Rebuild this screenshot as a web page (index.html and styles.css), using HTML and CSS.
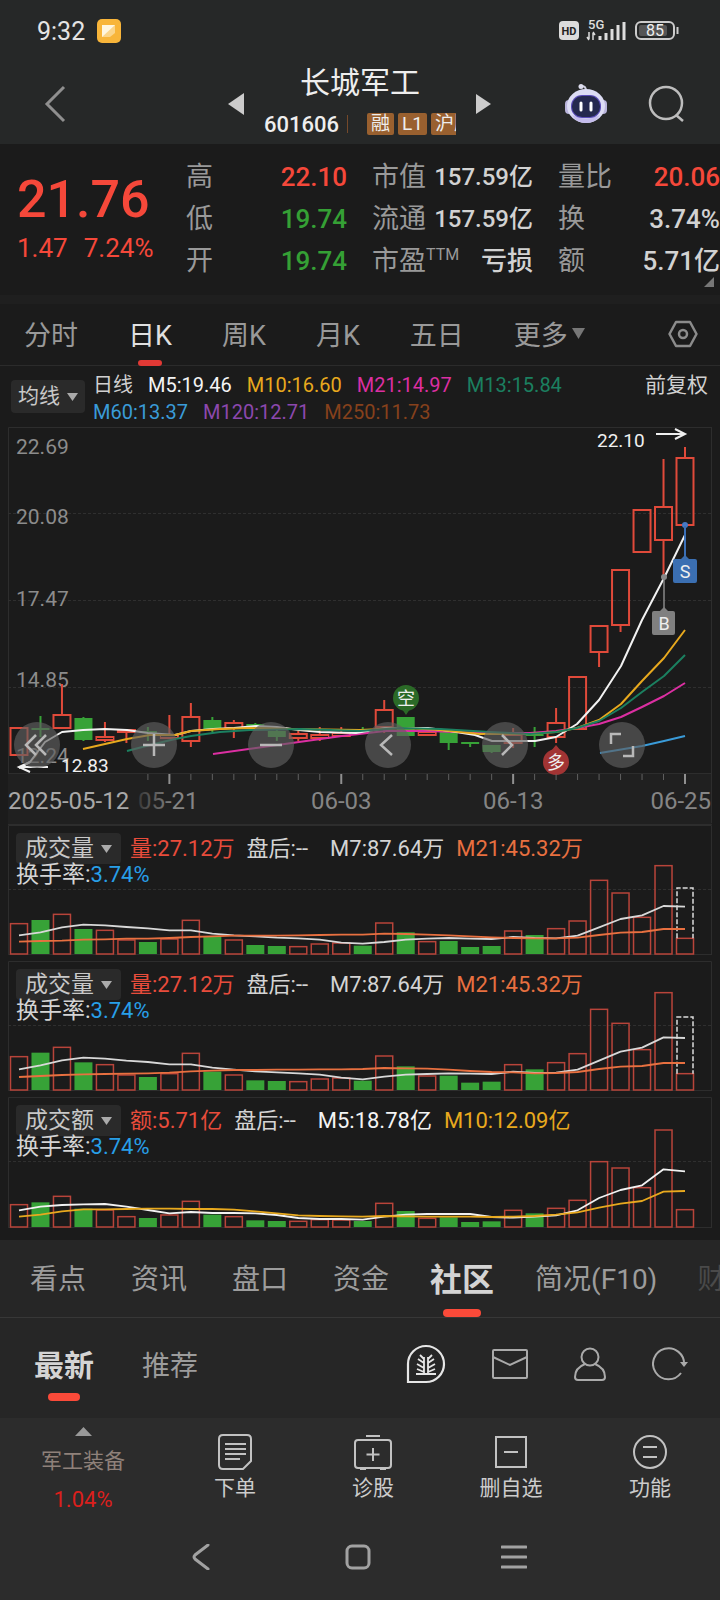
FILE: index.html
```html
<!DOCTYPE html>
<html lang="zh-CN">
<head>
<meta charset="utf-8">
<meta name="viewport" content="width=device-width, initial-scale=1">
<title>长城军工 601606</title>
<link rel="stylesheet" href="styles.css">
</head>
<body>
<div class="top">
  <div class="status">
    <span class="clock">9:32</span>
    <svg class="app-icon" width="24" height="24" viewBox="0 0 24 24"><rect width="24" height="24" rx="5" fill="#f8b53a"/><path d="M5 6h13v8l-5 4H5z" fill="#fbd58a"/><path d="M5 6h13L5 18z" fill="#fff6e0"/></svg>
    <span class="spacer"></span>
    <svg width="122" height="28" viewBox="0 -2 122 28">
      <rect x="1" y="2" width="20" height="19" rx="4" fill="#dcdcdc"/>
      <text x="11" y="16" class="hd">HD</text>
      <text x="30" y="10" class="net">5G</text>
      <path d="M31 13v7M35 21v-7M29 18l2 3M37 16l-2-3" stroke="#ddd" stroke-width="1.500" fill="none"/>
      <path d="M42 21v-4M48 21v-7M54 21V10M60 21V6M66 21V3" stroke="#ddd" stroke-width="3"/>
      <rect x="78" y="3" width="38" height="17" rx="5" fill="none" stroke="#ccc" stroke-width="2"/>
      <rect x="81" y="6" width="28" height="11" rx="2" fill="#555"/>
      <path d="M119.500 8v7" stroke="#ccc" stroke-width="2"/>
      <text x="97" y="17" class="batt">85</text>
    </svg>
  </div>
  <header class="header">
    <button class="icon-btn back" aria-label="返回"><svg width="22" height="38" viewBox="0 0 22 38"><path d="M20 2L3 19l17 17" fill="none" stroke="#8f8f8f" stroke-width="3"/></svg></button>
    <div class="stock">
      <button class="icon-btn" aria-label="上一只"><svg width="16" height="22" viewBox="0 0 16 22"><path d="M16 0v22L0 11z" fill="#ccc"/></svg></button>
      <div class="stock-id">
        <h1>长城军工</h1>
        <div class="code-row"><span class="code">601606</span><span class="bar"></span><span class="tags"><span class="tag">融</span><span class="tag">L1</span><span class="tag">沪股</span></span></div>
      </div>
      <button class="icon-btn" aria-label="下一只"><svg width="16" height="22" viewBox="0 0 16 22"><path d="M0 1v20l15-10z" fill="#ccc"/></svg></button>
    </div>
    <div class="header-actions">
      <button class="icon-btn" aria-label="智能助手"><svg width="44" height="42" viewBox="0 0 44 42">
        <path d="M22 8q0-5-4-5" fill="none" stroke="#ccd" stroke-width="2"/><circle cx="17" cy="3.500" r="2.500" fill="#dde"/>
        <rect x="1" y="17" width="8" height="14" rx="4" fill="#b9b4dc"/><rect x="35" y="17" width="8" height="14" rx="4" fill="#b9b4dc"/>
        <ellipse cx="22" cy="23" rx="19" ry="17" fill="#dcdcf4"/><path d="M8 32q14 7 28 0-4 8-14 8T8 32z" fill="#c4bcec"/>
        <rect x="7" y="12" width="30" height="23" rx="11" fill="#5a4cb8"/><rect x="8" y="13" width="28" height="21" rx="10" fill="#25294f"/>
        <path d="M17 20v7M27 20v7" stroke="#fff" stroke-width="3" stroke-linecap="round"/></svg></button>
      <button class="icon-btn" aria-label="搜索"><svg width="38" height="38" viewBox="0 0 38 38"><circle cx="18" cy="18" r="16" fill="none" stroke="#bdbdbd" stroke-width="2.500"/><path d="M28 30l7 6" stroke="#bdbdbd" stroke-width="2.500"/></svg></button>
    </div>
  </header>
</div>

<section class="quote">
  <div class="price"><div class="last">21.76</div><div class="change"><span>1.47</span><span>7.24%</span></div></div>
  <dl class="facts">
    <div><dt>高</dt><dd class="up">22.10</dd></div>
    <div><dt>低</dt><dd class="down">19.74</dd></div>
    <div><dt>开</dt><dd class="down">19.74</dd></div>
  </dl>
  <dl class="facts">
    <div><dt>市值</dt><dd class="unit">157.59亿</dd></div>
    <div><dt>流通</dt><dd class="unit">157.59亿</dd></div>
    <div><dt>市盈<sup>TTM</sup></dt><dd>亏损</dd></div>
  </dl>
  <dl class="facts">
    <div><dt>量比</dt><dd class="up">20.06</dd></div>
    <div><dt>换</dt><dd>3.74%</dd></div>
    <div><dt>额</dt><dd>5.71亿</dd></div>
  </dl>
  <svg class="corner" width="10" height="10" viewBox="0 0 10 10"><path d="M10 0v10H0z" fill="#777"/></svg>
</section>

<nav class="period">
  <button>分时</button><button class="active">日K</button><button>周K</button><button>月K</button><button>五日</button>
  <button class="more">更多<svg width="13" height="11" viewBox="0 0 13 11"><path d="M0 0h13L6.500 11z" fill="#777"/></svg></button>
  <button class="settings" aria-label="设置"><svg width="30" height="28" viewBox="0 0 30 28"><path d="M8 2h14l6.500 12L22 26H8L1.500 14z" fill="none" stroke="#8c8c8c" stroke-width="2.500" stroke-linejoin="round"/><circle cx="15" cy="14" r="4" fill="none" stroke="#8c8c8c" stroke-width="2.500"/></svg></button>
</nav>

<div class="legend">
  <button class="select">均线<svg width="11" height="8" viewBox="0 0 11 8"><path d="M0 0h11L5.500 8z" fill="#aaa"/></svg></button>
  <div class="averages">
    <span>日线</span><span class="c-white">M5:19.46</span><span class="c-yellow">M10:16.60</span><span class="c-pink">M21:14.97</span><span class="c-green">M13:15.84</span>
    <span class="c-blue">M60:13.37</span><span class="c-purple">M120:12.71</span><span class="c-brown">M250:11.73</span>
  </div>
  <button class="adjust">前复权</button>
</div>

<section class="kline">
  <svg id="kline" viewBox="0 427 720 398" role="img" aria-label="日K线图"></svg>
  <div class="controls">
    <button aria-label="最左"><svg viewBox="0 0 46 46"><path d="M22 13L12 23l10 10M32 13L22 23l10 10"/></svg></button>
    <button aria-label="放大"><svg viewBox="0 0 46 46"><path d="M12 23h22M23 12v22"/></svg></button>
    <button aria-label="缩小"><svg viewBox="0 0 46 46"><path d="M12 23h22"/></svg></button>
    <button aria-label="左移"><svg viewBox="0 0 46 46"><path d="M27 13L16 23l11 10"/></svg></button>
    <button aria-label="右移"><svg viewBox="0 0 46 46"><path d="M20 13l10 10-10 10"/></svg></button>
    <button aria-label="全屏"><svg viewBox="0 0 46 46"><path d="M12 22V12h10M34 24v10H24"/></svg></button>
  </div>
</section>

<section class="volume">
  <svg id="vol1" viewBox="0 0 720 136" role="img" aria-label="成交量图"></svg>
  <div class="vol-head">
    <div class="vol-row"><button class="select">成交量<svg width="11" height="8" viewBox="0 0 11 8"><path d="M0 0h11L5.500 8z" fill="#aaa"/></svg></button><span class="c-red">量:27.12万</span><span class="after">盘后:--</span><span class="first">M7:87.64万</span><span class="c-orange">M21:45.32万</span></div>
    <div class="turnover">换手率:<span class="c-rate">3.74%</span></div>
  </div>
</section>
<section class="volume">
  <svg id="vol2" viewBox="0 0 720 136" role="img" aria-label="成交量图"></svg>
  <div class="vol-head">
    <div class="vol-row"><button class="select">成交量<svg width="11" height="8" viewBox="0 0 11 8"><path d="M0 0h11L5.500 8z" fill="#aaa"/></svg></button><span class="c-red">量:27.12万</span><span class="after">盘后:--</span><span class="first">M7:87.64万</span><span class="c-orange">M21:45.32万</span></div>
    <div class="turnover">换手率:<span class="c-rate">3.74%</span></div>
  </div>
</section>
<section class="volume">
  <svg id="vol3" viewBox="0 0 720 143" role="img" aria-label="成交额图"></svg>
  <div class="vol-head">
    <div class="vol-row"><button class="select">成交额<svg width="11" height="8" viewBox="0 0 11 8"><path d="M0 0h11L5.500 8z" fill="#aaa"/></svg></button><span class="c-red">额:5.71亿</span><span class="after">盘后:--</span><span class="first c-white">M5:18.78亿</span><span class="c-yellow">M10:12.09亿</span></div>
    <div class="turnover">换手率:<span class="c-rate">3.74%</span></div>
  </div>
</section>

<nav class="sections">
  <button>看点</button><button>资讯</button><button>盘口</button><button>资金</button><button class="active">社区</button><button>简况(F10)</button><button class="faded">财</button>
</nav>
<div class="feed">
  <button class="active">最新</button><button>推荐</button>
  <span class="spacer"></span>
  <button aria-label="社区"><svg width="40" height="40" viewBox="0 0 40 40" fill="none" stroke="#e6e6e6" stroke-width="2.200"><path d="M2 38V20a18 18 0 1 1 18 18z"/><path d="M18 30V13M22 30V13M10 30h20M18 19l-6-4M18 24l-7-4M18 28l-7-3M18 15l-4-4M22 19l6-4M22 24l7-4M22 28l7-3M22 15l4-4" stroke-width="1.800"/></svg></button>
  <button aria-label="消息"><svg width="36" height="30" viewBox="0 0 36 30" fill="none" stroke="#aaa" stroke-width="2"><rect x="1" y="1" width="34" height="28" rx="1"/><path d="M1 8l17 8 17-8"/></svg></button>
  <button aria-label="我的"><svg width="32" height="34" viewBox="0 0 32 34" fill="none" stroke="#aaa" stroke-width="2"><circle cx="16" cy="10" r="8.500"/><path d="M11 17Q1 21 1 30q0 3 3 3h24q3 0 3-3 0-9-10-13"/></svg></button>
  <button aria-label="刷新"><svg width="36" height="34" viewBox="0 0 36 34"><path d="M32 18a15.500 15.500 0 1 0-3 8" fill="none" stroke="#aaa" stroke-width="2"/><path d="M28 15h8l-4 5z" fill="#aaa"/></svg></button>
</div>

<footer class="bottom">
  <div class="toolbar">
    <button class="sector"><svg width="17" height="9" viewBox="0 0 17 9"><path d="M0 9h17L8.500 0z" fill="#999"/></svg><span class="sector-name">军工装备</span><span class="sector-pct">1.04%</span></button>
    <button><svg width="40" height="38" viewBox="0 0 40 38"><path d="M8 2h24q4 0 4 4v22l-8 8H8q-4 0-4-4V6q0-4 4-4zM10 11h21M10 16h21M10 21h21M10 26h15"/></svg>下单</button>
    <button><svg width="40" height="38" viewBox="0 0 40 38"><path d="M5 7h30q3 0 3 3v22q0 3-3 3H5q-3 0-3-3V10q0-3 3-3zM13 3h14M20 15v13M13.500 21.500h13M7 36h6M27 36h6"/></svg>诊股</button>
    <button><svg width="40" height="38" viewBox="0 0 40 38"><path d="M5 4h30v30H5zM13 19h14"/></svg>删自选</button>
    <button><svg width="40" height="38" viewBox="0 0 40 38"><circle cx="20" cy="19" r="16"/><path d="M13 14h14M13 24h14"/></svg>功能</button>
  </div>
  <div class="system">
    <button aria-label="返回"><svg width="26" height="26" viewBox="0 0 26 26"><path d="M19 1L6 11q-2 2 0 4l13 10"/></svg></button>
    <button aria-label="主页"><svg width="26" height="26" viewBox="0 0 26 26"><rect x="2" y="2" width="22" height="22" rx="5"/></svg></button>
    <button aria-label="多任务"><svg width="26" height="26" viewBox="0 0 26 26"><path d="M1 3h24M1 13h24M1 23h24"/></svg></button>
  </div>
</footer>
<script src="charts.js"></script>
</body>
</html>
```
FILE: styles.css
```css
* { box-sizing: border-box; }
body {
  margin: 0;
  background: #1b1b1b;
  color: #d0d0d0;
  font-family: Roboto, "Noto Sans CJK SC", sans-serif;
  font-size: 22px;
  overflow-x: hidden;
}
button {
  margin: 0; padding: 0; border: 0; background: none;
  color: inherit; font: inherit; white-space: nowrap;
}
svg { display: block; flex: none; }
.spacer { flex: 1; }

.top { background: #262828; padding-bottom: 4px; }
.status { display: flex; align-items: center; height: 62px; padding: 0 40px 0 37px; }
.clock { font-size: 25px; color: #e4e4e4; }
.app-icon { margin-left: 12px; }
.hd { font-size: 11px; font-weight: 700; fill: #222; text-anchor: middle; }
.net { font-size: 13px; font-weight: 500; fill: #ddd; }
.batt { font-size: 16px; fill: #eee; text-anchor: middle; }

.header { display: grid; grid-template-columns: 1fr auto 1fr; align-items: center; height: 78px; padding: 0 34px; }
.icon-btn { display: block; }
.back { margin-left: 10px; justify-self: start; }
.stock { display: flex; align-items: center; gap: 20px; }
.stock-id { width: 192px; }
h1 { margin: 2px 0 0; font-size: 30px; line-height: 38px; font-weight: 400; color: #eee; text-align: center; }
.code-row { display: flex; align-items: center; height: 44px; }
.code { color: #eee; font-weight: 500; }
.bar { width: 1px; height: 18px; background: #75492a; margin-left: 8px; }
.tags { display: flex; gap: 4px; margin-left: auto; width: 89px; overflow: hidden; }
.tag { flex: none; padding: 0 4px; background: #99602f; border-radius: 2px; color: #eee; font-size: 19px; line-height: 22px; }
.header-actions { display: flex; justify-content: flex-end; align-items: center; gap: 40px; }

.quote {
  position: relative;
  display: grid; grid-template-columns: 144fr 161fr 161fr 162fr; gap: 25px;
  padding: 12px 0 13px 17px;
  border-bottom: 9px solid #1f1f1f;
}
.price { color: #f5483a; padding-top: 14px; }
.last { font-size: 52px; line-height: 60px; font-weight: 500; }
.change { display: flex; gap: 16px; font-size: 26px; line-height: 36px; }
.facts { margin: 0; }
.facts div { display: flex; justify-content: space-between; align-items: center; height: 42px; line-height: 42px; white-space: nowrap; }
dt { font-size: 27px; color: #999; }
dd { margin: 0; font-size: 26px; font-weight: 500; color: #d2d2d2; }
dd.unit { font-size: 24px; }
dd.up { color: #f5483a; }
dd.down { color: #35a035; }
sup { font-size: 16px; line-height: 1; }
.corner { position: absolute; right: 6px; bottom: 8px; }

.period { display: flex; align-items: center; gap: 50px; height: 62px; padding: 0 22px 0 24px; border-bottom: 1px solid #2b2b2b; font-size: 27px; color: #999; }
.period button { position: relative; height: 61px; padding-bottom: 2px; }
.period .active { color: #e0e0e0; }
.period .active::after { content: ""; position: absolute; left: 50%; bottom: -1px; width: 24px; height: 6px; margin-left: -12px; border-radius: 3px; background: #e23935; }
.more { display: flex; align-items: center; gap: 4px; }
.period .settings { margin-left: auto; display: flex; align-items: center; }

.legend { display: flex; align-items: flex-start; gap: 8px; min-height: 61px; padding: 6px 12px 0 11px; font-size: 20px; line-height: 27px; }
.select { display: flex; align-items: center; gap: 7px; background: #2a2a2a; border-radius: 4px; color: #c8c8c8; }
.legend .select { height: 33px; padding: 0 7px; margin-top: 8px; font-size: 21px; }
.averages { flex: 1; display: flex; flex-wrap: wrap; column-gap: 15px; }
.adjust { font-size: 21px; }
.c-white { color: #f4f4f4; }
.c-yellow { color: #e8a91e; }
.c-pink { color: #dc2fa2; }
.c-green { color: #1b8060; }
.c-blue { color: #3a9bd8; }
.c-purple { color: #8c48ae; }
.c-brown { color: #86411c; }
.c-red { color: #e84c3b; }
.c-orange { color: #e87040; }
.c-rate { color: #289fe8; }

.kline { position: relative; }
.kline > svg, .volume > svg { width: 100%; height: auto; }
.controls { position: absolute; left: 2%; right: 10.4%; top: 80%; display: flex; justify-content: space-between; transform: translateY(-50%); }
.controls button { width: 46px; height: 46px; border-radius: 50%; background: rgba(96, 96, 96, 0.65); }
.controls path { fill: none; stroke: #b8b8b8; stroke-width: 2.500; }
.price-label { font-size: 21px; fill: #8c8c8c; }
.date-label { font-size: 24px; fill: #858585; }
.date-label.start { fill: #a8a8a8; }
.extreme { font-size: 19px; fill: #f0f0f0; }
.marker { font-size: 18px; fill: #eee; text-anchor: middle; }

.volume { display: grid; }
.volume > svg, .vol-head { grid-area: 1 / 1; }
.vol-head { padding: 8px 16px 0; line-height: 24px; color: #d4d4d4; z-index: 1; }
.vol-row { display: flex; align-items: center; white-space: nowrap; }
.volume .select { height: 31px; padding: 0 9px; margin-right: 9px; font-size: 23px; }
.turnover { font-size: 23px; line-height: 22px; }
.c-rate { font-size: 22px; }
.after { margin-left: 12px; }
.first { margin-left: 22px; }
.first + span { margin-left: 12px; }

.sections { display: flex; align-items: center; gap: 45px; height: 78px; padding-left: 30px; overflow: hidden; background: #262626; border-bottom: 1px solid #373737; font-size: 28px; color: #9c9c9c; }
.sections button, .feed button { position: relative; }
.sections button { height: 77px; padding-bottom: 3px; }
.sections .active { font-size: 32px; font-weight: 700; color: #d4d4d4; margin: 0 -4px; }
.sections .active::after, .feed .active::after { content: ""; position: absolute; left: 50%; bottom: 0; width: 38px; height: 8px; margin-left: -19px; border-radius: 4px; background: #fa4a39; }
.sections .faded { color: #4a4a4a; margin-left: -5px; }
.feed { display: flex; align-items: center; height: 100px; padding: 0 32px 8px 34px; gap: 46px; background: #262626; font-size: 28px; color: #9c9c9c; }
.feed .active { font-size: 30px; font-weight: 700; color: #d4d4d4; margin-right: 2px; padding-bottom: 3px; }
.feed .active::after { width: 32px; margin-left: -16px; bottom: -13px; }

.bottom { background: #2c2c2c; min-height: 182px; }
.toolbar { display: grid; grid-template-columns: 166fr 138fr 138fr 138fr 140fr; height: 96px; font-size: 21px; color: #ccc; }
.toolbar button { display: flex; flex-direction: column; align-items: center; gap: 2px; padding-top: 15px; line-height: 30px; }
.toolbar button svg { fill: none; stroke: #c2c2c2; stroke-width: 2; }
.toolbar .sector { padding-top: 9px; gap: 9px; }
.toolbar .sector svg { stroke: none; }
.sector-name { color: #8f817a; line-height: 32px; }
.sector-pct { color: #dc1f1c; font-size: 22px; line-height: 28px; }
.system { display: flex; justify-content: center; gap: 130px; padding: 30px 4px 0 0; }
.system svg { fill: none; stroke: #a2a2a2; stroke-width: 3; stroke-linecap: round; }
```
FILE: charts.js
```js
const RED = "#e04a3a", GREEN = "#37a237";
const center = i => 19 + i * 666 / 31;
const line = (pts, color, w = 2) =>
  `<polyline points="${pts.map(p => p.join()).join(" ")}" fill="none" stroke="${color}" stroke-width="${w}" stroke-linejoin="round"/>`;

// [bodyTop, bodyBottom, high, low, falling]
const candles = [
  [728,755,728,755,0],[728,730,716,737,1],[715,728,684,728,0],[718,740,717,741,1],
  [737,740,722,742,0],[730,732,730,743,0],[731,733,727,741,1],[735,738,715,739,0],
  [717,741,703,747,0],[720,729,717,732,1],[723,728,720,738,0],[724,727,723,727,1],
  [731,737,730,741,1],[734,738,731,741,0],[735,738,727,741,0],[733,736,727,736,0],
  [729,731,727,732,1],[710,727,700,733,0],[717,736,717,736,1],[732,735,730,735,0],
  [732,743,732,750,1],[742,744,742,747,1],[745,752,745,753,1],[735,743,728,748,0],
  [734,736,727,747,1],[723,737,708,743,0],[677,729,677,729,0],[626,652,626,667,0],
  [570,625,570,632,0],[510,552,510,552,0],[507,540,459,577,0],[458,525,447,525,0]
];

function drawKline() {
  let s = `<rect x="8" y="774" width="704" height="50" fill="#202020"/>
    <path d="M8.500 773V427.500H712M711.500 427V823M8 773.500H712M8 824.500H712" fill="none" stroke="#2d2d2d"/>
    <path d="M8 513.500H712M8 600.500H712M8 687.500H712" stroke="#2f2f2f" stroke-dasharray="3 2"/>`;
  [["22.69",454],["20.08",524],["17.47",606],["14.85",687],["12.24",763]].forEach(([t, y]) => {
    s += `<text x="16" y="${y}" class="price-label">${t}</text>`;
  });
  candles.forEach(([t, b, h, l, falling], i) => {
    const x = center(i), c = falling ? GREEN : RED;
    s += `<path d="M${x} ${h}V${t}M${x} ${b}V${l}" stroke="${c}" stroke-width="2"/>`;
    s += falling
      ? `<rect x="${x - 9}" y="${t}" width="18" height="${b - t}" fill="${c}"/>`
      : `<rect x="${x - 8.5}" y="${t}" width="17" height="${b - t}" fill="none" stroke="${c}" stroke-width="2"/>`;
  });
  s += line([[600,753],[642,746],[664,741],[685,736]], "#3a9bd8");
  s += line([[213,754],[256,748],[299,742],[342,736],[385,731],[430,731],[480,733],[530,733],[556,731],[577,728],[599,724],[621,717],[642,707],[664,696],[685,683]], "#dc2fa2");
  s += line([[19,768],[30,762],[45,742],[62,732],[83,730],[105,729],[127,730],[148,733],[175,735],[191,731],[213,729],[234,728],[256,726],[277,727],[299,730],[320,732],[356,733],[385,728],[428,728],[450,731],[475,735],[492,741],[535,741],[556,737],[577,724],[599,700],[621,666],[642,620],[664,578],[685,535]], "#f2f2f2");
  s += line([[83,749],[105,744],[127,739],[150,735],[175,735],[191,731],[220,729],[250,728],[290,729],[360,730],[405,728],[440,730],[480,734],[530,734],[556,732],[577,728],[599,720],[621,704],[642,681],[664,658],[685,630]], "#e8a91e");
  s += line([[127,751],[150,745],[175,739],[191,736],[220,732],[250,730],[300,729],[360,731],[400,728],[440,729],[490,732],[530,734],[556,732],[577,728],[599,721],[621,708],[642,692],[664,676],[685,655]], "#1b8060");
  // trade signals
  s += `<path d="M402 709l4 6 4-6z" fill="#2b6a27"/><circle cx="406" cy="698" r="13" fill="#2b6a27"/><text x="406" y="705" class="marker">空</text>
    <path d="M551 751l5-6 5 6z" fill="#a23434"/><circle cx="556" cy="762" r="13" fill="#a23434"/><text x="556" y="769" class="marker">多</text>
    <circle cx="664" cy="577" r="3" fill="#888"/><path d="M664 578V611" stroke="#888" stroke-width="1.500"/>
    <path d="M654 611h6l4-4 4 4h5q2 0 2 2v20q0 2-2 2h-19q-2 0-2-2v-20q0-2 2-2z" fill="#808080"/><text x="664" y="630" class="marker">B</text>
    <circle cx="685" cy="525" r="3" fill="#4779c4"/><path d="M685 526V559" stroke="#3b70b8" stroke-width="2"/>
    <path d="M675 559h6l4-4 4 4h6q2 0 2 2v20q0 2-2 2h-20q-2 0-2-2v-20q0-2 2-2z" fill="#3b6fb2"/><text x="685" y="578" class="marker">S</text>
    <text x="597" y="447" class="extreme">22.10</text><path d="M656 434H684M675 429l10 5-10 5" fill="none" stroke="#f0f0f0" stroke-width="2"/>
    <text x="61" y="772" class="extreme">12.83</text><path d="M48 767H20M30 762l-11 5 11 5" fill="none" stroke="#f0f0f0" stroke-width="2"/>`;
  for (let i = 6; i < 32; i++) {
    const major = i % 8 === 7;
    s += `<path d="M${center(i)} 774v${major ? 10 : 6}" stroke="${major ? "#909090" : "#606060"}" stroke-width="${major ? 2 : 1}"/>`;
  }
  s += `<text x="8" y="809" class="date-label start">2025-05-12</text>
    <defs><linearGradient id="fade"><stop offset="0" stop-color="#3a3a3a"/><stop offset="0.600" stop-color="#858585"/></linearGradient></defs>
    <text x="138" y="809" class="date-label" style="fill:url(#fade)">05-21</text>
    <text x="311" y="809" class="date-label">06-03</text>
    <text x="483" y="809" class="date-label">06-13</text>
    <text x="711" y="809" class="date-label" text-anchor="end">06-25</text>`;
  document.getElementById("kline").innerHTML = s;
}

const falling = new Set([1, 3, 6, 9, 11, 12, 16, 18, 20, 21, 22, 24]);
// Bars and lines are levels in thirds of a chart unit; "floor" is the zero level.
function drawVolume(id, { base, floor, bars, slow, fast, fastColor, slowColor, estimate }) {
  const y = v => base - (floor - v) / 3;
  let s = `<path d="M8.500 ${base}V0.500H711.500V${base}M8 ${base}.500H712" fill="none" stroke="#2d2d2d"/>
    <path d="M8 64.500H712" stroke="#2f2f2f" stroke-dasharray="3 2"/>`;
  bars.forEach((v, i) => {
    const x = center(i), t = y(v);
    s += falling.has(i)
      ? `<rect x="${x - 9}" y="${t}" width="18" height="${base - t}" fill="${GREEN}"/>`
      : `<rect x="${x - 8.5}" y="${t}" width="17" height="${base - t}" fill="none" stroke="#b8443a" stroke-width="1.500"/>`;
  });
  if (estimate) s += `<path d="M677 ${y(bars[31])}V${y(estimate)}H693V${y(bars[31])}" fill="none" stroke="#ddd" stroke-width="1.500" stroke-dasharray="5 2"/>`;
  s += line(fast.map((v, i) => [center(i), y(v)]), fastColor, 1.8);
  s += line(slow.map((v, i) => [center(i), y(v)]), slowColor, 1.8);
  document.getElementById(id).innerHTML = s;
}

drawKline();
drawVolume("vol1", {
  base: 129, floor: 403, estimate: 205, fastColor: "#d8d8d8", slowColor: "#e87040",
  bars: [312,301,284,328,332,361,367,358,302,352,361,376,379,381,373,370,378,310,338,366,364,382,379,334,346,327,304,182,220,293,138,356],
  fast: [347,338,323,315,317,322,326,332,332,342,347,350,354,356,360,369,372,367,360,357,355,357,358,352,355,356,348,323,298,287,259,261],
  slow: [366,364,363,360,359,357,357,355,352,350,348,348,348,347,346,345,345,342,343,345,347,350,353,355,356,356,354,346,339,337,328,328]
});
drawVolume("vol2", {
  base: 129, floor: 812, estimate: 593, fastColor: "#d8d8d8", slowColor: "#e87040",
  bars: [712,700,684,729,736,767,773,763,702,757,767,783,785,787,779,776,784,710,741,770,769,790,787,736,750,730,703,570,612,691,520,763],
  fast: [750,738,723,715,718,724,728,735,735,745,751,756,759,762,766,775,780,772,766,764,762,763,764,757,761,760,751,724,697,685,654,656],
  slow: [773,770,767,765,764,763,762,760,756,754,752,752,751,751,750,750,749,746,747,748,751,755,758,759,762,761,758,749,742,740,731,731]
});
drawVolume("vol3", {
  base: 130, floor: 1221, fastColor: "#f2f2f2", slowColor: "#e8a91e",
  bars: [1154,1147,1129,1166,1170,1190,1194,1185,1144,1184,1190,1201,1203,1204,1199,1200,1203,1150,1173,1195,1192,1206,1204,1171,1180,1165,1141,1025,1044,1103,930,1169],
  fast: [1171,1160,1155,1153,1152,1160,1170,1180,1176,1179,1179,1180,1185,1194,1197,1197,1199,1190,1184,1182,1182,1182,1191,1193,1190,1186,1171,1134,1110,1096,1048,1054],
  slow: [1190,1184,1174,1168,1168,1167,1166,1166,1167,1167,1169,1174,1180,1186,1188,1189,1190,1188,1189,1190,1190,1190,1191,1190,1188,1184,1177,1163,1151,1143,1115,1113]
});
```
